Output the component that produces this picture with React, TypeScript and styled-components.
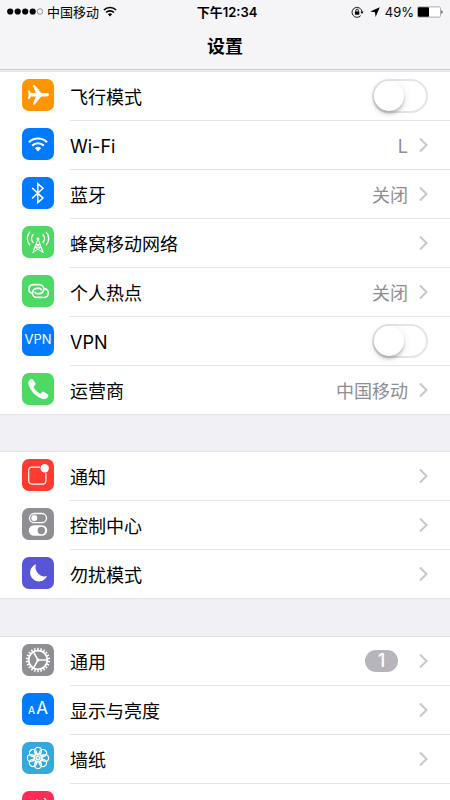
import React from "react";
import styled, { createGlobalStyle } from "styled-components";

const GlobalStyle = createGlobalStyle`
  *, *::before, *::after { box-sizing: border-box; }
  body {
    margin: 0;
    background: #efeff4;
    color: #000;
    font-family: Inter, "Noto Sans CJK SC", sans-serif;
    font-size: 18px;
    line-height: 24px;
  }
`;

const Screen = styled.div`
  display: flex;
  flex-direction: column;
  height: 100vh;
  overflow: hidden;
`;

const Header = styled.header`
  flex: none;
  background: #f5f5f7;
  border-bottom: 1px solid #c9c9d0;
`;

const StatusBar = styled.div`
  display: grid;
  grid-template-columns: 1fr auto 1fr;
  align-items: center;
  height: 23px;
  padding: 0 7px;
  font-size: 13px;
  line-height: 18px;
`;

const StatusGroup = styled.div<{ $end?: boolean }>`
  display: flex;
  align-items: center;
  justify-content: ${(p) => (p.$end ? "flex-end" : "flex-start")};
  gap: ${(p) => (p.$end ? 3 : 4)}px;
`;

const Clock = styled.time`
  padding-left: 4px;
  font-weight: 600;
`;

const StatusIcon = styled.svg<{ $gap?: number }>`
  display: block;
  flex: none;
  margin-right: ${(p) => p.$gap ?? 0}px;
`;

const Title = styled.h1`
  margin: 0;
  padding: 12px 0 10px;
  font-size: 18px;
  line-height: 24px;
  font-weight: 600;
  text-align: center;
`;

const Content = styled.main`
  flex: 1;
  min-height: 0;
  overflow-y: auto;
  scrollbar-width: none;
  padding-top: 1px;
`;

const Group = styled.ul`
  list-style: none;
  margin: 0;
  padding: 0;
  background: #fff;
  border-top: 1px solid #e2e2e6;
  border-bottom: 1px solid #e2e2e6;

  & + & { margin-top: 36px; }
  & + & + & { margin-top: 37px; }
`;

const Item = styled.li`
  display: flex;
  padding-left: 22px;

  & + & { margin-top: 1px; }
`;

const rowLayout = `
  flex: 1;
  display: flex;
  align-items: center;
  min-width: 0;
  height: 48px;
  color: inherit;
  text-decoration: none;
`;

const RowLink = styled.a`${rowLayout}`;
const RowLabel = styled.label`${rowLayout}`;

const Body = styled.span<{ $last?: boolean }>`
  display: flex;
  align-items: center;
  flex: 1;
  align-self: stretch;
  margin-left: 16px;
  padding-right: 22px;
  box-shadow: ${(p) => (p.$last ? "none" : "0 1px 0 #e4e4e7")};
`;

const Name = styled.span`
  flex: 1;
  padding-top: 4px;
`;

const Value = styled.span`
  padding-top: 4px;
  color: #8e8e93;
`;

const Badge = styled.span`
  min-width: 33px;
  height: 22px;
  margin-right: 10px;
  border-radius: 11px;
  background: #b6b5bb;
  color: #fff;
  font-weight: 500;
  line-height: 22px;
  text-align: center;
`;

const Chevron = styled.svg`
  display: block;
  flex: none;
  margin-left: 11px;
`;

const Switch = styled.input`
  appearance: none;
  flex: none;
  width: 56px;
  height: 34px;
  margin: 0;
  padding: 0;
  border: 2px solid #e5e5e5;
  border-radius: 17px;
  background: #fff;
  transition: background 0.2s, border-color 0.2s;

  &::before {
    content: "";
    display: block;
    width: 30px;
    height: 30px;
    border-radius: 50%;
    background: #fff;
    box-shadow: 0 3px 3px rgba(0, 0, 0, 0.18), 0 2px 9px rgba(0, 0, 0, 0.12);
    transition: margin 0.2s;
  }

  &:checked {
    background: #4cd964;
    border-color: #4cd964;
  }

  &:checked::before {
    margin-left: 22px;
  }
`;

const Tile = styled.span<{ $color: string }>`
  flex: none;
  width: 32px;
  height: 32px;
  margin-bottom: 2px;
  border-radius: 7px;
  background: ${(p) => p.$color};
  overflow: hidden;
  color: #fff;
`;

const Glyph = styled.svg`
  display: block;
  width: 32px;
  height: 32px;
`;

const TileText = styled.span`
  display: block;
  font-size: 13px;
  line-height: 31px;
  text-align: center;
`;

const SmallA = styled.span`
  margin-right: 1px;
  font-size: 10px;
  font-weight: 500;
`;

const LargeA = styled.span`
  font-size: 17px;
`;

const stroke = { fill: "none", stroke: "#fff", strokeLinecap: "round", strokeLinejoin: "round" } as const;

const Plane = () => (
  <Glyph viewBox="0 0 32 32" fill="#fff">
    <path d="M27 15.700c0-1-1.200-1.700-2.600-1.700h-5.200L12.700 6h-2l3.100 8H9L7.300 11.400H6l.7 4.300L6 20h1.300L9 17.400h4.800l-3.100 8h2l6.500-8h5.200c1.400 0 2.600-.7 2.600-1.700z" />
  </Glyph>
);

const Wifi = () => (
  <Glyph viewBox="0 0 32 32" fill="none" stroke="#fff" strokeWidth="2.2">
    <path d="M6.900 14.200a13 13 0 0 1 18.200 0M10.200 17.600a8.300 8.300 0 0 1 11.600 0" />
    <path d="M12.900 20.200a4.500 4.500 0 0 1 6.200 0L16 23.400z" fill="#fff" stroke="none" />
  </Glyph>
);

const Bluetooth = () => (
  <Glyph viewBox="0 0 32 32" {...stroke} strokeWidth="1.500" strokeLinejoin="miter">
    <path d="M10.500 11.300l10.500 9.800-5.200 4.500V6.700l5.200 4.500-10.500 9.800" />
  </Glyph>
);

const Tower = () => (
  <Glyph viewBox="0 0 32 32" {...stroke} strokeWidth="1.400">
    <path d="M7.700 6.200a9.500 9.500 0 0 0 0 12.600M24.300 6.200a9.500 9.500 0 0 1 0 12.600M11 8.700a5.800 5.800 0 0 0 0 7.600M21 8.700a5.800 5.800 0 0 1 0 7.600" />
    <path d="M16 13l-5.200 13.300M16 13l5.200 13.300M14.200 18.500h3.600M12.800 21.300h6.400M14.200 18.500l5 2.800 1.500 4.800M17.800 18.500l-5 2.800-1.500 4.800M12.800 21.300l7.800 4.800M19.200 21.300l-7.800 4.800" strokeWidth="1" />
    <circle cx="16" cy="12.800" r="1.500" fill="#fff" stroke="none" />
  </Glyph>
);

const Hotspot = () => (
  <Glyph viewBox="0 0 32 32" {...stroke} strokeWidth="1.700">
    <path d="M9.600 18.200a4.500 4.500 0 0 1 1.900-8.600h5.800a4.500 4.500 0 0 1 0 9h-2.400a2 2 0 0 1-1.900-1.400" />
    <path d="M22.700 13.600a4.500 4.500 0 0 1-1.900 8.800H15a4.500 4.500 0 0 1 0-9h2.400a2 2 0 0 1 1.900 1.400" />
  </Glyph>
);

const Phone = () => (
  <Glyph viewBox="0 0 32 32" fill="#fff">
    <path d="M8.400 6.300c1.100-.7 1.900-.7 2.600.2l2.300 3.600c.5.900.4 1.600-.4 2.300l-.8.700c-.6.600-.6 1.200-.1 2 1.400 2.100 3 3.800 5.100 5.200.8.500 1.500.5 2-.1l.7-.9c.6-.8 1.400-.9 2.300-.4l3.600 2.400c.9.700.9 1.500.1 2.600-1.200 1.700-2.900 2.500-4.900 2-7.200-2-12.500-7.500-14.500-14.800-.5-1.900.3-3.600 2-4.800z" />
  </Glyph>
);

const Notification = () => (
  <Glyph viewBox="0 0 32 32" {...stroke} strokeWidth="1.200">
    <path d="M17.500 8.200H10A3.300 3.300 0 0 0 6.700 11.500v10.300A3.300 3.300 0 0 0 10 25.100h10.600a3.300 3.300 0 0 0 3.300-3.300V14.600" />
    <circle cx="22.700" cy="9.300" r="4.200" fill="#fff" stroke="none" />
  </Glyph>
);

const Control = () => (
  <Glyph viewBox="0 0 32 32" {...stroke} strokeWidth="1.300">
    <rect x="7.500" y="5.500" width="17" height="9.200" rx="4.600" />
    <circle cx="12.300" cy="10.100" r="3" fill="#fff" stroke="none" />
    <path d="M12 17.300h8a5.200 5.200 0 0 1 0 10.400h-8a5.200 5.200 0 0 1 0-10.400z" fill="#fff" stroke="none" />
    <circle cx="19.300" cy="22.500" r="3.700" fill="#8e8e93" stroke="none" />
  </Glyph>
);

const Moon = () => (
  <Glyph viewBox="0 0 32 32" fill="#fff">
    <path d="M14 7.300A8.800 8.800 0 1 0 25 19.100 9.200 9.200 0 0 1 14 7.300z" />
  </Glyph>
);

const teeth = Array.from({ length: 22 }, (_, i) => (i * 360) / 22);

const Gear = () => (
  <Glyph viewBox="0 0 32 32" {...stroke} strokeLinecap="butt">
    <circle cx="16" cy="16" r="9.300" strokeWidth="1.800" />
    {teeth.map((a) => (
      <path key={a} d="M16 3.800v3" strokeWidth="1.500" transform={`rotate(${a} 16 16)`} />
    ))}
    <path d="M16 16h9.300M16 16l-4.700-8.100M16 16l-4.700 8.100" strokeWidth="1.500" />
    <circle cx="16" cy="16" r="1.500" fill="#fff" stroke="none" />
  </Glyph>
);

const petals = [0, 45, 90, 135, 180, 225, 270, 315];

const Flower = () => (
  <Glyph viewBox="0 0 32 32" {...stroke} strokeWidth="1.200">
    {petals.map((a) => (
      <circle key={a} cx="16" cy="8.900" r="3.500" transform={`rotate(${a} 16 16)`} />
    ))}
    {petals.map((a) => (
      <path key={a} d="M16 14.500c-1.800-1.300-2-2.800 0-4.600 2 1.800 1.800 3.300 0 4.600z" strokeWidth=".8" transform={`rotate(${a + 22} 16 16)`} />
    ))}
  </Glyph>
);

const Speaker = () => (
  <Glyph viewBox="0 0 32 32" {...stroke} strokeWidth="1.400">
    <path d="M6 13.500h3.500L15 9v14l-5.500-4.500H6z" fill="#fff" />
    <path d="M18 12.500a5 5 0 0 1 0 7M20.300 10a8.500 8.500 0 0 1 0 12M22.600 7.600a12 12 0 0 1 0 16.800" />
  </Glyph>
);

type Entry = {
  name?: string;
  label?: string;
  color: string;
  icon: React.ReactNode;
  value?: string;
  badge?: number;
  toggle?: boolean;
};

const groups: Entry[][] = [
  [
    { name: "飞行模式", color: "#ff9500", icon: <Plane />, toggle: true },
    { name: "Wi-Fi", color: "#007aff", icon: <Wifi />, value: "L" },
    { name: "蓝牙", color: "#007aff", icon: <Bluetooth />, value: "关闭" },
    { name: "蜂窝移动网络", color: "#4cd964", icon: <Tower /> },
    { name: "个人热点", color: "#4cd964", icon: <Hotspot />, value: "关闭" },
    { name: "VPN", color: "#007aff", icon: <TileText>VPN</TileText>, toggle: true },
    { name: "运营商", color: "#4cd964", icon: <Phone />, value: "中国移动" },
  ],
  [
    { name: "通知", color: "#ff3b30", icon: <Notification /> },
    { name: "控制中心", color: "#8e8e93", icon: <Control /> },
    { name: "勿扰模式", color: "#5856d6", icon: <Moon /> },
  ],
  [
    { name: "通用", color: "#8e8e93", icon: <Gear />, badge: 1 },
    {
      name: "显示与亮度",
      color: "#007aff",
      icon: (
        <TileText>
          <SmallA>A</SmallA>
          <LargeA>A</LargeA>
        </TileText>
      ),
    },
    { name: "墙纸", color: "#34aadc", icon: <Flower /> },
    { label: "声音", color: "#ff2d55", icon: <Speaker /> },
  ],
];

function Row({ entry, last }: { entry: Entry; last: boolean }) {
  const { name, label, color, icon, value, badge, toggle } = entry;
  const tile = <Tile $color={color} aria-hidden="true">{icon}</Tile>;
  if (toggle) {
    return (
      <Item>
        <RowLabel>
          {tile}
          <Body $last={last}>
            <Name>{name}</Name>
            <Switch type="checkbox" role="switch" />
          </Body>
        </RowLabel>
      </Item>
    );
  }
  return (
    <Item>
      <RowLink href="#" aria-label={label}>
        {tile}
        <Body $last={last}>
          <Name>{name}</Name>
          {value && <Value>{value}</Value>}
          {badge !== undefined && <Badge>{badge}</Badge>}
          <Chevron width="9" height="16" viewBox="0 0 9 16" fill="none" stroke="#c7c7cc" strokeWidth="2" aria-hidden="true">
            <path d="M1 1.500L7.500 8 1 14.500" />
          </Chevron>
        </Body>
      </RowLink>
    </Item>
  );
}

export default function App() {
  return (
    <Screen>
      <GlobalStyle />
      <Header>
        <StatusBar>
          <StatusGroup>
            <StatusIcon width="36" height="7" viewBox="0 0 36 7" aria-hidden="true">
              {[3.200, 10.700, 18.200, 25.700].map((x) => (
                <circle key={x} cx={x} cy="3.500" r="3.100" />
              ))}
              <circle cx="33" cy="3.500" r="2.800" fill="none" stroke="#555" strokeWidth=".6" />
            </StatusIcon>
            <span>中国移动</span>
            <StatusIcon $gap={0} width="14" height="11" viewBox="0 0 14 11" fill="none" stroke="#000" strokeWidth="1.700" aria-hidden="true">
              <path d="M.9 4a8.700 8.700 0 0 1 12.200 0M3.100 6.500a5.500 5.500 0 0 1 7.800 0" />
              <path d="M4.900 8.200a3 3 0 0 1 4.200 0L7 10.400z" fill="#000" stroke="none" />
            </StatusIcon>
          </StatusGroup>
          <Clock>下午12:34</Clock>
          <StatusGroup $end>
            <StatusIcon $gap={3} width="13" height="12" viewBox="0 0 13 12" fill="none" stroke="#000" aria-hidden="true">
              <path d="M9.700 9.700A5 5 0 1 1 11 6" strokeWidth=".9" />
              <path d="M9.400 5.800h3.200L11 7.900z" fill="#000" stroke="none" />
              <rect x="3.900" y="5.400" width="4.400" height="3.300" fill="#000" stroke="none" />
              <path d="M4.800 5.600V4.400a1.300 1.300 0 0 1 2.600 0v1.200" strokeWidth=".9" />
            </StatusIcon>
            <StatusIcon $gap={2} width="10" height="10" viewBox="0 0 10 10" aria-hidden="true">
              <path d="M9.800.2L5.600 10 5 5.200.2 4.600z" />
            </StatusIcon>
            <span>49%</span>
            <StatusIcon width="26" height="12" viewBox="0 0 26 12" aria-hidden="true">
              <rect x=".5" y=".9" width="23" height="10.200" rx="1.400" fill="#fff" stroke="#999" strokeWidth=".8" />
              <rect x="1" y="1.300" width="11" height="9.400" rx=".8" />
              <path d="M24.400 4.200c1.600.4 1.600 3.200 0 3.600z" fill="#444" />
            </StatusIcon>
          </StatusGroup>
        </StatusBar>
        <Title>设置</Title>
      </Header>
      <Content>
        {groups.map((entries, g) => (
          <Group key={g}>
            {entries.map((entry, i) => (
              <Row key={i} entry={entry} last={i === entries.length - 1} />
            ))}
          </Group>
        ))}
      </Content>
    </Screen>
  );
}
